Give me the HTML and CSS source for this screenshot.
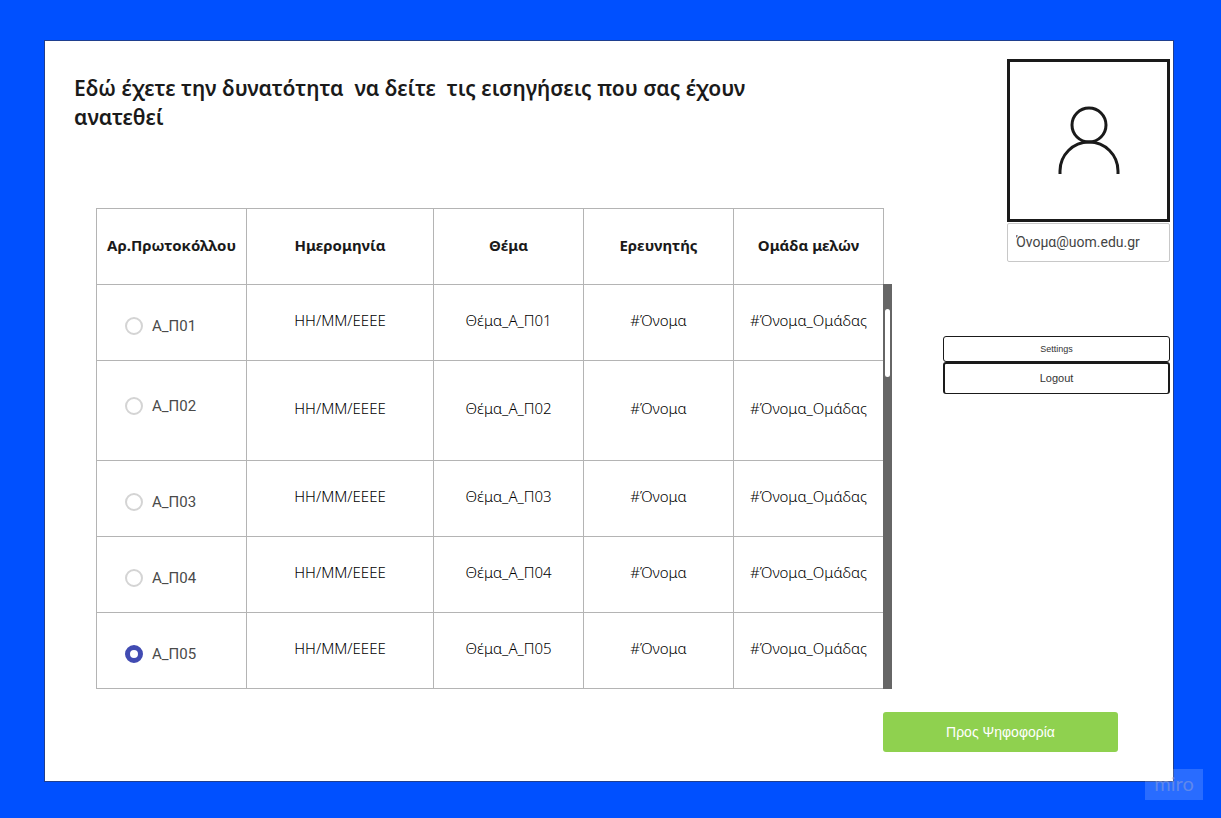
FILE: index.html
```html
<!DOCTYPE html>
<html lang="el">
<head>
<meta charset="utf-8">
<meta name="viewport" content="width=device-width, initial-scale=1">
<title>Εισηγήσεις</title>
<link rel="stylesheet" href="styles.css">
</head>
<body>
<div class="board">
  <div class="content">
    <main class="main">
      <h1 class="title">Εδώ έχετε την δυνατότητα  να δείτε  τις εισηγήσεις που σας έχουν ανατεθεί</h1>
      <div class="table-area">
        <table class="proposals">
          <colgroup><col class="col"><col><col class="col"><col class="col"><col class="col"></colgroup>
          <thead>
            <tr><th scope="col">Αρ.Πρωτοκόλλου</th><th scope="col">Ημερομηνία</th><th scope="col">Θέμα</th><th scope="col">Ερευνητής</th><th scope="col">Ομάδα μελών</th></tr>
          </thead>
          <tbody>
            <tr><td class="pick"><label class="option"><input class="radio" type="radio" name="protocol"><span>Α_Π01</span></label></td><td>ΗΗ/ΜΜ/ΕΕΕΕ</td><td>Θέμα_Α_Π01</td><td>#Όνομα</td><td>#Όνομα_Ομάδας</td></tr>
            <tr class="tall"><td class="pick"><label class="option"><input class="radio" type="radio" name="protocol"><span>Α_Π02</span></label></td><td>ΗΗ/ΜΜ/ΕΕΕΕ</td><td>Θέμα_Α_Π02</td><td>#Όνομα</td><td>#Όνομα_Ομάδας</td></tr>
            <tr><td class="pick"><label class="option"><input class="radio" type="radio" name="protocol"><span>Α_Π03</span></label></td><td>ΗΗ/ΜΜ/ΕΕΕΕ</td><td>Θέμα_Α_Π03</td><td>#Όνομα</td><td>#Όνομα_Ομάδας</td></tr>
            <tr><td class="pick"><label class="option"><input class="radio" type="radio" name="protocol"><span>Α_Π04</span></label></td><td>ΗΗ/ΜΜ/ΕΕΕΕ</td><td>Θέμα_Α_Π04</td><td>#Όνομα</td><td>#Όνομα_Ομάδας</td></tr>
            <tr><td class="pick"><label class="option"><input class="radio" type="radio" name="protocol" checked><span>Α_Π05</span></label></td><td>ΗΗ/ΜΜ/ΕΕΕΕ</td><td>Θέμα_Α_Π05</td><td>#Όνομα</td><td>#Όνομα_Ομάδας</td></tr>
          </tbody>
        </table>
        <div class="scroll-track"><div class="scroll-thumb"></div></div>
      </div>
    </main>
    <aside class="side">
      <div class="profile">
        <div class="avatar">
          <svg class="person" viewBox="0 0 64 70" fill="none" stroke="#1a1a1a" stroke-width="3" aria-hidden="true">
            <circle cx="32" cy="20" r="17"/>
            <path d="M3 69v-3a29 29 0 0 1 58 0v3"/>
          </svg>
        </div>
        <input class="email" type="email" aria-label="Email" value="Όνομα@uom.edu.gr">
      </div>
      <div class="actions">
        <button class="settings" type="button">Settings</button>
        <button class="logout" type="button">Logout</button>
      </div>
    </aside>
  </div>
  <div class="footer"><button class="vote" type="button">Προς Ψηφοφορία</button></div>
</div>
<div class="watermark">miro</div>
</body>
</html>
```
FILE: styles.css
```css
* { box-sizing: border-box; }
body {
  margin: 0;
  min-height: 100vh;
  padding: 40px 47px 36px 44px;
  display: flex;
  background: #0050ff;
  color: #1a1a1a;
  font-family: "Noto Sans", "Open Sans", sans-serif;
  position: relative;
}
.board {
  flex: 1;
  display: flex;
  flex-direction: column;
  background: #fff;
  border: 1px solid #1f3f8f;
}
.content {
  display: flex;
  justify-content: space-between;
  gap: 24px;
  padding-right: 3px;
}
.main { flex: 0 1 847px; padding: 33px 0 0 29px; }
.title {
  margin: 0 0 76px;
  max-width: 700px;
  font-size: 21px;
  line-height: 29px;
  font-weight: 600;
  white-space: pre-wrap;
}
.table-area { display: flex; margin-left: 22px; }
.proposals {
  flex: 1;
  table-layout: fixed;
  border-collapse: collapse;
  font-size: 15px;
  line-height: 20px;
  text-align: center;
}
.proposals th, .proposals td {
  height: 76px;
  padding: 0 0 4px;
  border: 1px solid #b4b4b4;
}
.proposals th { font-weight: 700; }
.proposals td { padding-bottom: 6px; font-weight: 300; color: #000; }
.proposals .tall td { height: 100px; }
.col { width: 150px; }
.proposals .pick { vertical-align: top; padding: 32px 0 0 28px; }
.proposals .tall .pick { padding-top: 36px; }
.option {
  display: flex;
  align-items: center;
  gap: 9px;
  font: 15px/18px Roboto, Arial, sans-serif;
  color: #4a4a4a;
}
.radio {
  appearance: none;
  width: 18px;
  height: 18px;
  margin: 0;
  border: 2px solid #d4d4d4;
  border-radius: 50%;
  background: #fff;
}
.radio:checked { border: 5px solid #414bb2; }
.scroll-track {
  width: 9px;
  margin: 76px 0 0 -1px;
  padding: 25px 2px 0;
  background: #666;
}
.scroll-thumb { height: 68px; border-radius: 3px; background: #fff; }
.side {
  flex: 0 0 227px;
  display: flex;
  flex-direction: column;
  padding-top: 18px;
}
.profile { align-self: flex-end; width: 163px; }
.avatar {
  display: flex;
  justify-content: center;
  height: 163px;
  padding-top: 43px;
  border: 3px solid #1a1a1a;
}
.person { width: 64px; height: 70px; }
.email {
  display: block;
  width: 100%;
  height: 39px;
  margin-top: 1px;
  padding: 0 8px 2px;
  border: 1px solid #c8c8c8;
  border-radius: 2px;
  font: 14px/20px Roboto, Arial, sans-serif;
  color: #444;
}
.actions { display: flex; flex-direction: column; margin-top: 74px; }
.settings, .logout {
  padding: 0;
  background: #fff;
  border: 1px solid #1a1a1a;
  border-radius: 3px;
  font-family: "Liberation Sans", Arial, sans-serif;
  color: #333;
}
.settings { height: 26px; font-size: 9px; }
.logout { height: 32px; font-size: 11px; border-width: 2px; border-bottom-width: 1px; padding-bottom: 2px; }
.footer { display: flex; justify-content: flex-end; padding: 23px 55px 29px 0; }
.vote {
  width: 235px;
  height: 40px;
  border: 0;
  border-radius: 3px;
  background: #8fd14f;
  color: #fff;
  font: 14px/20px "Liberation Sans", Arial, sans-serif;
}
.watermark {
  position: absolute;
  right: 18px;
  bottom: 18px;
  width: 58px;
  height: 31px;
  background: rgba(255, 255, 255, 0.16);
  color: rgba(150, 165, 215, 0.5);
  font: 20px/28px Lato, sans-serif;
  text-align: center;
}
```
